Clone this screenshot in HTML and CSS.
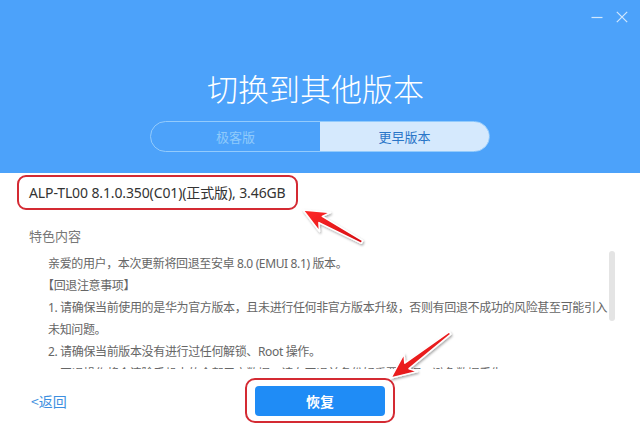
FILE: index.html
```html
<!DOCTYPE html>
<html lang="zh-CN">
<head>
<meta charset="utf-8">
<title>切换到其他版本</title>
<link rel="stylesheet" href="styles.css">
</head>
<body>
<div class="app">
  <header class="header">
    <div class="winbar">
      <svg class="win-icon" width="12" height="12" viewBox="0 0 12 12"><path d="M0.5 6.5H11.5" stroke="#d2e8fd" stroke-width="1.2" fill="none"/></svg>
      <svg class="win-icon" width="12" height="12" viewBox="0 0 12 12"><path d="M0.8 0.8L11.2 11.2M11.2 0.8L0.8 11.2" stroke="#d2e8fd" stroke-width="1.2" fill="none"/></svg>
    </div>
    <h1 class="title">切换到其他版本</h1>
    <div class="tabs">
      <div class="tab">极客版</div>
      <div class="tab tab-active">更早版本</div>
    </div>
  </header>

  <main class="content">
    <div class="version-row">
      <span class="mark version">ALP-TL00 8.1.0.350(C01)(正式版), 3.46GB</span>
    </div>
    <div class="section-title">特色内容</div>
    <div class="notes">
      <div class="notes-text">
        <p>亲爱的用户，本次更新将回退至安卓 8.0 (EMUI 8.1) 版本。</p>
        <p class="bracket">【回退注意事项】</p>
        <p>1. 请确保当前使用的是华为官方版本，且未进行任何非官方版本升级，否则有回退不成功的风险甚至可能引入未知问题。</p>
        <p>2. 请确保当前版本没有进行过任何解锁、Root 操作。</p>
        <p>3. 回退操作将会清除手机中的全部用户数据，请在回退前备份好重要数据，避免数据丢失。</p>
      </div>
      <div class="scrollbar"><div class="thumb"></div></div>
    </div>
  </main>

  <footer class="footer">
    <a class="back">&lt;返回</a>
    <div class="mark btn-mark"><button class="restore">恢复</button></div>
    <span class="spacer"></span>
  </footer>

  <svg class="arrows" width="640" height="441" viewBox="0 0 640 441">
    <defs>
      <linearGradient id="rg" x1="0" y1="0" x2="1" y2="1">
        <stop offset="0" stop-color="#ff2a2a"/>
        <stop offset="1" stop-color="#d40d12"/>
      </linearGradient>
      <filter id="sh" x="-20%" y="-20%" width="140%" height="140%">
        <feDropShadow dx="1" dy="1.5" stdDeviation="1.2" flood-color="#000" flood-opacity="0.35"/>
      </filter>
    </defs>
    <polygon points="303,210 330.5,212.5 322.3,216.4 362.7,240.7 361.3,243.3 318.9,222.6 319.5,231.5" fill="url(#rg)" stroke="#fff" stroke-width="1.5" stroke-linejoin="round" filter="url(#sh)"/>
    <polygon points="391,378 417.5,371.5 409,368.7 450.9,334.2 449.1,331.8 404.8,363.1 404,354" fill="url(#rg)" stroke="#fff" stroke-width="1.5" stroke-linejoin="round" filter="url(#sh)"/>
  </svg>
</div>
</body>
</html>
```

FILE: styles.css
```css
* { box-sizing: border-box; }
html, body { margin: 0; padding: 0; }
body {
  width: 640px;
  height: 441px;
  overflow: hidden;
  background: #fff;
  font-family: "Noto Sans", "Noto Sans CJK SC", sans-serif;
}
.app {
  position: relative;
  width: 640px;
  height: 441px;
  overflow: hidden;
}

/* header */
.header {
  height: 173px;
  background: #4ca2fa;
  display: flex;
  flex-direction: column;
  align-items: center;
}
.winbar {
  align-self: stretch;
  display: flex;
  justify-content: flex-end;
  gap: 13px;
  padding: 11px 12px 0 0;
  height: 23px;
}
.win-icon { display: block; }
.title {
  margin: 45px 9px 0 0;
  font-family: "Noto Sans CJK SC", sans-serif;
  font-weight: 300;
  font-size: 31px;
  line-height: 40px;
  color: #fff;
}
.tabs {
  margin-top: 13px;
  width: 340px;
  height: 31px;
  display: flex;
  border: 1px solid #93cbfc;
  border-radius: 16px;
  overflow: hidden;
}
.tab {
  flex: 1;
  display: flex;
  align-items: center;
  justify-content: center;
  font-family: "Noto Sans CJK SC", sans-serif;
  font-size: 13px;
  color: #8fcafb;
}
.tab-active {
  background: #d5e9fd;
  color: #2a76c8;
}

/* content */
.content {
  padding-top: 2px;
}
.version-row {
  padding-left: 17px;
}
.mark {
  display: inline-block;
  border: 2px solid #d42a33;
  border-radius: 9px;
}
.version {
  padding: 0 10px;
  line-height: 31px;
  font-size: 14px;
  letter-spacing: -0.12px;
  color: #333;
}
.section-title {
  margin: 16px 0 0 29px;
  font-family: "Noto Sans CJK SC", sans-serif;
  font-size: 13px;
  line-height: 20px;
  color: #777;
}
.notes {
  margin: 4px 0 0 29px;
  width: 586px;
  height: 119px;
  display: flex;
}
.notes-text {
  flex: 1;
  min-width: 0;
  overflow: hidden;
  padding: 3px 0 0 19px;
  font-size: 12px;
  line-height: 22px;
  color: #666;
  letter-spacing: -0.36px;
}
.notes-text p { margin: 0; }
.notes-text .bracket { margin-left: -6px; }
.scrollbar {
  width: 6px;
  padding-top: 1px;
}
.thumb {
  height: 70px;
  border-radius: 3px;
  background: #e4e4e4;
}

/* footer */
.footer {
  margin-top: 9px;
  display: grid;
  grid-template-columns: 1fr auto 1fr;
  align-items: center;
}
.back {
  justify-self: start;
  padding-left: 31px;
  font-family: "Noto Sans CJK SC", sans-serif;
  font-size: 14px;
  color: #3d8fe0;
  text-decoration: none;
}
.btn-mark {
  padding: 6px 8px 5px;
  border-radius: 10px;
}
.restore {
  display: block;
  width: 130px;
  height: 30px;
  border: none;
  border-radius: 4px;
  background: #1f8cf6;
  color: #fff;
  font-family: "Noto Sans CJK SC", sans-serif;
  font-size: 14px;
  font-weight: 700;
  padding: 0;
}

/* annotation arrows */
.arrows {
  position: absolute;
  left: 0;
  top: 0;
  pointer-events: none;
}
```
